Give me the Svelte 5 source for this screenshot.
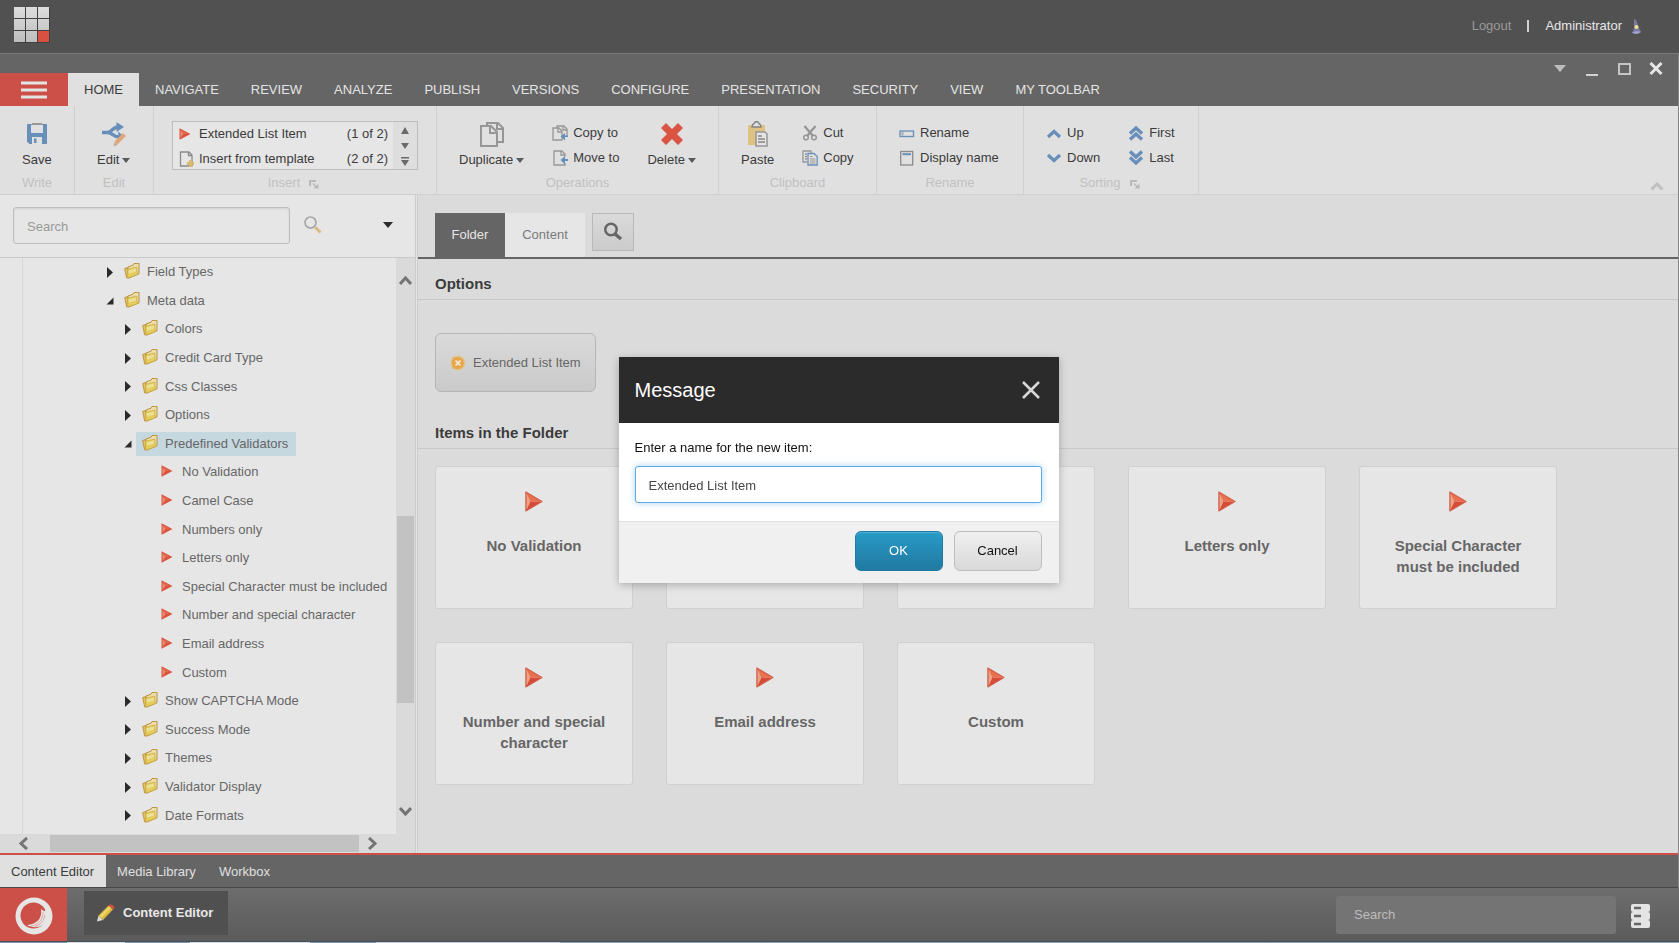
<script>
  const ribbonTabs = ['HOME', 'NAVIGATE', 'REVIEW', 'ANALYZE', 'PUBLISH', 'VERSIONS', 'CONFIGURE', 'PRESENTATION', 'SECURITY', 'VIEW', 'MY TOOLBAR'];

  const tree = [
    { label: 'Field Types', level: 1, state: 'closed' },
    { label: 'Meta data', level: 1, state: 'open' },
    { label: 'Colors', level: 2, state: 'closed' },
    { label: 'Credit Card Type', level: 2, state: 'closed' },
    { label: 'Css Classes', level: 2, state: 'closed' },
    { label: 'Options', level: 2, state: 'closed' },
    { label: 'Predefined Validators', level: 2, state: 'open', selected: true },
    { label: 'No Validation', level: 3 },
    { label: 'Camel Case', level: 3 },
    { label: 'Numbers only', level: 3 },
    { label: 'Letters only', level: 3 },
    { label: 'Special Character must be included', level: 3 },
    { label: 'Number and special character', level: 3 },
    { label: 'Email address', level: 3 },
    { label: 'Custom', level: 3 },
    { label: 'Show CAPTCHA Mode', level: 2, state: 'closed' },
    { label: 'Success Mode', level: 2, state: 'closed' },
    { label: 'Themes', level: 2, state: 'closed' },
    { label: 'Validator Display', level: 2, state: 'closed' },
    { label: 'Date Formats', level: 2, state: 'closed' }
  ];

  // Cards that the dialog covers carry no title.
  const cards = ['No Validation', '', '', 'Letters only', 'Special Character must be included', 'Number and special character', 'Email address', 'Custom'];

  let itemName = $state('Extended List Item');
</script>

{#snippet icon(name)}
  {#if name === 'save'}
    <svg width="20" height="22" viewBox="0 0 20 22"><path d="M0 1h20v20H2.500L0 18.500z" fill="#688fb9"/><path d="M4 2h12v8H4z" fill="#e0e0e0"/><path d="M5 1h10" stroke="#999" stroke-width="2"/><path d="M5 14h10v7H5z" fill="#e0e0e0"/><path d="M7 15.500h2.500V20H7z" fill="#688fb9"/></svg>
  {:else if name === 'edit'}
    <svg width="24" height="24" viewBox="0 0 24 24"><g fill="none" stroke="#688fb9" stroke-width="3.300"><path d="M0 10.500h6C10 10 11 4.500 18 4.500"/><path d="M6 10.500c4 0 5 4.500 11 4.500"/></g><path d="M14.500 0l7.500 5-7.500 5zM16 9.500l5 4-4 4z" fill="#688fb9"/><path d="M14 21l8.500-8.500" stroke="#dfa778" stroke-width="4"/><path d="M11.500 24l1-4 3 3z" fill="#c9a18a"/></svg>
  {:else if name === 'duplicate'}
    <svg width="24" height="26" viewBox="0 0 24 26" fill="none" stroke="#969696" stroke-width="2"><path d="M7 5V2h11l5 5v14h-5M17 2v6h6"/><path d="M1 5h10l6 6v14H1zM10 5v7h7" fill="#e0e0e0"/></svg>
  {:else if name === 'delete'}
    <svg width="22" height="24" viewBox="0 0 22 24"><path d="M5 1l6 6 6-6 5 5-6 6 6 6-5 5-6-6-6 6-5-5 6-6-6-6z" fill="#d95442"/></svg>
  {:else if name === 'paste'}
    <svg width="20" height="26" viewBox="0 0 20 26"><rect x="0" y="4" width="17" height="20" rx="1" fill="#dec283"/><path d="M4 6c0-2 1-3 2-3.500C7 0 10 0 11 2.500c1 .500 2 1.500 2 3.500z" fill="#e0e0e0" stroke="#858585" stroke-width="1.500"/><path d="M8 11h9l2 2v12H8z" fill="#e4e4e4" stroke="#969696" stroke-width="1.500"/><path d="M10 15h4M10 18h7M10 21h7" stroke="#858585" stroke-width="1.500"/></svg>
  {:else if name === 'copyto'}
    <svg width="16" height="16" viewBox="0 0 16 16" fill="none" stroke="#969696" stroke-width="1.300"><path d="M5 3V1h7l3 3v8M11 1v4h4"/><path d="M1 3h6l3 3v9H1zM6 3v4h4" fill="#e0e0e0"/><path d="M16 12h-3v3.500L8.500 11.500 13 8v2.500h3z" fill="#688fb9" stroke="none"/></svg>
  {:else if name === 'moveto'}
    <svg width="16" height="16" viewBox="0 0 16 16" fill="none" stroke="#969696" stroke-width="1.300"><path d="M13 6.500V4l-3-3H2v14h11v-2M9 1v4h4"/><path d="M16 11h-3v3.500L8.500 10 13 6v3h3z" fill="#688fb9" stroke="none"/></svg>
  {:else if name === 'cut'}
    <svg width="16" height="16" viewBox="0 0 16 16" fill="none"><path d="M2.500 1l8.500 10M13.500 1L5 11" stroke="#969696" stroke-width="2.300"/><circle cx="4" cy="12.500" r="2.300" stroke="#969696" stroke-width="1.500"/><circle cx="12" cy="12.500" r="2.300" stroke="#969696" stroke-width="1.500"/></svg>
  {:else if name === 'copy'}
    <svg width="16" height="16" viewBox="0 0 16 16" fill="none"><path d="M5 12H1V1h8v2M3 4h2M3 6.500h2M3 9h2" stroke="#969696" stroke-width="1.300"/><path d="M6 3.500h6l3.200 3V15H6z" fill="#e0e0e0" stroke="#688fb9" stroke-width="1.300"/><path d="M8 6.500h2.500M8 9h5.500M8 11h5.500M8 13h5.500" stroke="#969696"/></svg>
  {:else if name === 'rename'}
    <svg width="16" height="16" viewBox="0 0 16 16" fill="none"><rect x="1" y="6" width="13.500" height="5.500" stroke="#688fb9" stroke-width="1.300"/><path d="M3.500 7v3.500" stroke="#aaa" stroke-width="2"/></svg>
  {:else if name === 'display'}
    <svg width="16" height="16" viewBox="0 0 16 16" fill="none"><rect x="1.700" y="1.500" width="12" height="13.500" stroke="#8a8a8a" stroke-width="1.300"/><path d="M3.500 4.200h8.500" stroke="#688fb9" stroke-width="2"/></svg>
  {:else if name === 'up'}
    <svg width="16" height="16" viewBox="0 0 16 16" fill="none" stroke="#688fb9" stroke-width="3.200"><path d="M2 12l6-5.500L14 12"/></svg>
  {:else if name === 'down'}
    <svg width="16" height="16" viewBox="0 0 16 16" fill="none" stroke="#688fb9" stroke-width="3.200"><path d="M2 5l6 5.500L14 5"/></svg>
  {:else if name === 'first'}
    <svg width="16" height="16" viewBox="0 0 16 16" fill="none" stroke="#688fb9" stroke-width="3.400"><path d="M2 8.500L8 3l6 5.500M2 14.500L8 9l6 5.500"/></svg>
  {:else if name === 'last'}
    <svg width="16" height="16" viewBox="0 0 16 16" fill="none" stroke="#688fb9" stroke-width="3.400"><path d="M2 1.500L8 7l6-5.500M2 7.500L8 13l6-5.500"/></svg>
  {:else if name === 'template'}
    <svg width="16" height="16" viewBox="0 0 16 16" fill="none"><path d="M1.500 1h8.500l3 3v11H1.500zM9.500 1v3.500H13" stroke="#8a8a8a" stroke-width="1.300"/><path d="M11.500 9v7M8 12.500h7" stroke="#d8bb70" stroke-width="2.800"/></svg>
  {:else if name === 'arrow'}
    <svg width="12" height="12" viewBox="0 0 12 12"><path d="M.500.300L11.500 6 .500 11.700z" fill="#db523c"/><path d="M1.500 2v8L4.500 6z" fill="#e88c72"/><path d="M4.500 6L2.500 2.300l6.500 3.500z" fill="#e36a50"/></svg>
  {:else if name === 'bigarrow'}
    <svg width="18" height="21" viewBox="0 0 18 21"><path d="M.800.800L17.300 10.500.800 20.200z" fill="#d84e38" stroke="#cf6450"/><path d="M1.500 2v17L5.500 11.500 4.800 7z" fill="#e9a288"/><path d="M1.500 2l4 8.500L16 10.500z" fill="#e8714f"/><path d="M2 18.500l3.500-8h10.500z" fill="#d64c38"/><path d="M5.500 10.500L16 10.500" stroke="#ec9580" stroke-width=".600"/></svg>
  {:else if name === 'folder'}
    <svg width="16" height="16" viewBox="0 0 16 16"><path d="M.700 5.500l3-1 1 10-2 .500z" fill="#e0c566" stroke="#ba8f3a" stroke-width=".900"/><path d="M4 4l5-1.800 1-1.700 5-.200v10.500L4.500 15.200z" fill="#eddfac" stroke="#ba8f3a"/><path d="M3.700 6.300l9-2.300.600 7.800-9.500 3.200z" fill="#e4cd5c" stroke="#c9a743" stroke-width=".700"/><path d="M4.500 7.300l7.400-1.800.100 3-7 2.200z" fill="#ebe095"/></svg>
  {:else if name === 'launch'}
    <svg width="10" height="9" viewBox="0 0 10 9"><path d="M1 6V1h6" fill="none" stroke="#b9b9b9" stroke-width="2"/><path d="M4 3.500l3 3" fill="none" stroke="#b9b9b9" stroke-width="1.500"/><path d="M9.500 3.500V8.500h-5z" fill="#b9b9b9"/></svg>
  {:else if name === 'caret'}
    <svg width="8" height="5" viewBox="0 0 8 5"><path d="M0 0h8L4 5z" fill="#5a5a5a"/></svg>
  {/if}
{/snippet}

{#snippet big(name, label, caret)}
  <button class="big">
    <span class="big-icon">{@render icon(name)}</span>
    <span class="big-text">{label}{#if caret}{@render icon('caret')}{/if}</span>
  </button>
{/snippet}

{#snippet small(name, label)}
  <button class="small">{@render icon(name)}<span>{label}</span></button>
{/snippet}

<div class="page">
  <header class="top">
    <svg class="logo" width="36" height="36" viewBox="0 0 36 36" role="img" aria-label="Launchpad">
      <defs><linearGradient id="tile" x1="0" y1="0" x2="0" y2="36" gradientUnits="userSpaceOnUse"><stop offset="0" stop-color="#dedede"/><stop offset="1" stop-color="#bdbdbd"/></linearGradient></defs>
      <path d="M1 1h35v35H1z" fill="#404040"/>
      <path d="M0 0h11v11H0zM12 0h11v11H12zM24 0h11v11H24zM0 12h11v11H0zM12 12h11v11H12zM24 12h11v11H24zM0 24h11v11H0zM12 24h11v11H12z" fill="url(#tile)"/>
      <path d="M24 24h11v11H24z" fill="#d8503f"/>
    </svg>
    <nav class="account">
      <a href="#logout" class="logout">Logout</a>
      <span class="bar"></span>
      <a href="#account" class="user">Administrator</a>
      <svg width="10" height="15" viewBox="0 0 10 15"><path d="M2 0l2 1 3 8 2 4-4 2-5-1 2-5z" fill="#7d7aa8"/><path d="M0 14c2-2 7-2 9-1l-4 2z" fill="#a5a3cc"/><circle cx="4.500" cy="8" r="2" fill="#efe28a"/></svg>
    </nav>
  </header>

  <main class="window">
    <div class="titlebar">
      <nav class="ribbon-tabs">
        <button class="burger" aria-label="Menu"><svg width="28" height="18" viewBox="0 0 28 18"><path d="M1 2h26M1 9h26M1 16h26" stroke="#e4e4e4" stroke-width="3"/></svg></button>
        {#each ribbonTabs as tab, i}
          <button class="rtab" class:active={i === 0}>{tab}</button>
        {/each}
      </nav>
      <div class="controls">
        <button aria-label="Options"><svg width="14" height="14" viewBox="0 0 14 14"><path d="M1 3h12L7 10z" fill="#bdbdbd"/></svg></button>
        <button aria-label="Minimize"><svg width="14" height="14" viewBox="0 0 14 14"><path d="M1 13h12" stroke="#d0d0d0" stroke-width="2"/></svg></button>
        <button aria-label="Maximize"><svg width="14" height="14" viewBox="0 0 14 14"><rect x="2" y="2" width="11" height="10" fill="none" stroke="#c4c4c4" stroke-width="2"/></svg></button>
        <button aria-label="Close"><svg width="14" height="14" viewBox="0 0 14 14"><path d="M1.500 1l11 11M12.500 1l-11 11" stroke="#e6e6e6" stroke-width="3"/></svg></button>
      </div>
    </div>

    <div class="ribbon">
      <section class="group g-write">
        <div class="tools">{@render big('save', 'Save', false)}</div>
        <div class="caption">Write</div>
      </section>
      <section class="group g-edit">
        <div class="tools">{@render big('edit', 'Edit', true)}</div>
        <div class="caption">Edit</div>
      </section>
      <section class="group g-insert">
        <div class="tools">
          <div class="gallery">
            <div class="gallery-list">
              <button class="entry"><span class="entry-icon">{@render icon('arrow')}</span>Extended List Item<span class="count">(1 of 2)</span></button>
              <button class="entry"><span class="entry-icon">{@render icon('template')}</span>Insert from template<span class="count">(2 of 2)</span></button>
            </div>
            <div class="gallery-nav">
              <button aria-label="Previous"><svg width="8" height="7" viewBox="0 0 8 7"><path d="M0 7h8L4 0z" fill="#6a6a6a"/></svg></button>
              <button aria-label="Next"><svg width="8" height="6" viewBox="0 0 8 6"><path d="M0 0h8L4 6z" fill="#6a6a6a"/></svg></button>
              <button aria-label="All"><svg width="8" height="9" viewBox="0 0 8 9"><path d="M0 0h8v1.500H0zM0 3h8L4 9z" fill="#6a6a6a"/></svg></button>
            </div>
          </div>
        </div>
        <div class="caption">Insert<span class="launch">{@render icon('launch')}</span></div>
      </section>
      <section class="group g-ops">
        <div class="tools">
          {@render big('duplicate', 'Duplicate', true)}
          <div class="stack">{@render small('copyto', 'Copy to')}{@render small('moveto', 'Move to')}</div>
          {@render big('delete', 'Delete', true)}
        </div>
        <div class="caption">Operations</div>
      </section>
      <section class="group g-clip">
        <div class="tools">
          {@render big('paste', 'Paste', false)}
          <div class="stack">{@render small('cut', 'Cut')}{@render small('copy', 'Copy')}</div>
        </div>
        <div class="caption">Clipboard</div>
      </section>
      <section class="group g-name">
        <div class="tools"><div class="stack">{@render small('rename', 'Rename')}{@render small('display', 'Display name')}</div></div>
        <div class="caption">Rename</div>
      </section>
      <section class="group g-sort">
        <div class="tools">
          <div class="stack">{@render small('up', 'Up')}{@render small('down', 'Down')}</div>
          <div class="stack">{@render small('first', 'First')}{@render small('last', 'Last')}</div>
        </div>
        <div class="caption">Sorting<span class="launch">{@render icon('launch')}</span></div>
      </section>
      <button class="collapse" aria-label="Collapse ribbon"><svg width="14" height="10" viewBox="0 0 14 10"><path d="M1.500 8.500L7 3l5.500 5.500" fill="none" stroke="#bfbfbf" stroke-width="3"/></svg></button>
    </div>

    <div class="work">
      <aside class="side">
        <div class="finder">
          <input type="text" placeholder="Search" aria-label="Search the tree" />
          <button aria-label="Run search"><svg width="18" height="18" viewBox="0 0 18 18" fill="none"><circle cx="6.500" cy="6.500" r="5.500" stroke="#a4a4a4" stroke-width="1.600"/><path d="M11 11l5.500 5.500" stroke="#dcb887" stroke-width="3"/></svg></button>
          <button class="more" aria-label="Search options"><svg width="10" height="6" viewBox="0 0 10 6"><path d="M0 0h10L5 6z" fill="#2b2b2b"/></svg></button>
        </div>
        <div class="tree-row">
          <ul class="tree">
            {#each tree as node}
              <li class="l{node.level}">
                <span class="toggle">
                  {#if node.state === 'closed'}
                    <button aria-label="Expand {node.label}"><svg width="6" height="11" viewBox="0 0 6 11"><path d="M0 0l6 5.500L0 11z" fill="#2b2b2b"/></svg></button>
                  {:else if node.state === 'open'}
                    <button aria-label="Collapse {node.label}"><svg width="8" height="8" viewBox="0 0 8 8"><path d="M7.500.500v7H.500z" fill="#2b2b2b"/></svg></button>
                  {/if}
                </span>
                <a href="#item" class="node" class:selected={node.selected}>
                  <span class="node-icon">{@render icon(node.level === 3 ? 'arrow' : 'folder')}</span>{node.label}
                </a>
              </li>
            {/each}
          </ul>
          <div class="vbar">
            <svg width="13" height="10" viewBox="0 0 13 10"><path d="M1 9l5.500-6L12 9" fill="none" stroke="#747474" stroke-width="3"/></svg>
            <span class="before"></span><span class="thumb"></span><span class="after"></span>
            <svg width="13" height="10" viewBox="0 0 13 10"><path d="M1 1l5.500 6L12 1" fill="none" stroke="#747474" stroke-width="3"/></svg>
          </div>
        </div>
        <div class="hbar">
          <svg width="10" height="13" viewBox="0 0 10 13"><path d="M9 1L3 6.500 9 12" fill="none" stroke="#747474" stroke-width="3"/></svg>
          <span class="thumb"></span>
          <svg width="10" height="13" viewBox="0 0 10 13"><path d="M1 1l6 5.500L1 12" fill="none" stroke="#747474" stroke-width="3"/></svg>
        </div>
      </aside>

      <section class="editor">
        <nav class="etabs">
          <button class="etab active">Folder</button>
          <button class="etab">Content</button>
          <button class="lens" aria-label="Search"><svg width="20" height="20" viewBox="0 0 20 20" fill="none" stroke="#666"><circle cx="8" cy="7.500" r="5.700" stroke-width="2.500"/><path d="M12 12l6 5" stroke-width="3.500"/></svg></button>
        </nav>
        <h2>Options</h2>
        <div class="options">
          <button class="create">
            <svg width="16" height="16" viewBox="0 0 16 16"><defs><radialGradient id="glow"><stop offset="0" stop-color="#f6efe0"/><stop offset=".250" stop-color="#efb565"/><stop offset=".650" stop-color="#e7a548"/><stop offset="1" stop-color="#e7cf7a" stop-opacity=".200"/></radialGradient></defs><circle cx="8" cy="8" r="8" fill="url(#glow)"/><path d="M2 2h8l4 6-4 6H2z" fill="#e6a040" opacity=".400"/><path d="M5.500 5.500l5 5M10.500 5.500l-5 5" stroke="#f3ecdc" stroke-width="1.500"/></svg>
            Extended List Item
          </button>
        </div>
        <h2>Items in the Folder</h2>
        <div class="cards">
          {#each cards as card}
            <a href="#item" class="card">{@render icon('bigarrow')}<span>{card}</span></a>
          {/each}
        </div>
      </section>
    </div>

    <nav class="apps">
      <button class="active">Content Editor</button>
      <button>Media Library</button>
      <button>Workbox</button>
    </nav>
  </main>

  <footer class="taskbar">
    <button class="start" aria-label="Start">
      <svg width="38" height="38" viewBox="0 0 38 38"><circle cx="19" cy="19" r="18.500" fill="#e6e6e6"/><circle cx="18.500" cy="18.500" r="13" fill="#cd5048"/><path d="M26 12c1.500 9-4 15.500-14 16 9 5 20 1 20.500-9 0-3-.500-5-1.500-6.500-.500 1-1 1.500-2 1.700z" fill="#e6e6e6"/><path d="M28 15c0 8-5 13-12 14M30 18c-1 6-5 10-10 11.500" fill="none" stroke="#dc8a84" stroke-width=".700"/></svg>
    </button>
    <button class="task">
      <svg width="18" height="18" viewBox="0 0 18 18"><path d="M0 17.500l1.500-6L6 16z" fill="#dcdcd4"/><path d="M1.500 11.500L11.500 1.500l4.500 4-10 10.500z" fill="#dab944"/><path d="M2.500 12L12.500 2.500l1.500 1.300-9.500 10z" fill="#f0da66"/><path d="M11.500 1.500l1.500-1c1.500-.700 5 2 4.300 3.500L16 5.500z" fill="#cf5340"/></svg>
      <span>Content Editor</span>
    </button>
    <input type="text" class="tasksearch" placeholder="Search" aria-label="Search" />
    <button class="servers" aria-label="Databases">
      <svg width="20" height="24" viewBox="0 0 20 24"><g fill="#e4e4e4"><rect x="0" y="0" width="19" height="8" rx="2"/><rect x="0" y="8" width="19" height="8" rx="2"/><rect x="0" y="16" width="19" height="8" rx="2"/></g><path d="M3 4h7M3 12h7M3 20h7" stroke="#666" stroke-width="2.500"/></svg>
    </button>
  </footer>
  <div class="edge"></div>
</div>

<div class="backdrop">
  <div class="dialog" role="dialog" aria-modal="true" aria-labelledby="dialog-title">
    <div class="dialog-head">
      <h1 id="dialog-title">Message</h1>
      <button aria-label="Close"><svg width="18" height="18" viewBox="0 0 18 18"><path d="M1 1l16 16M17 1L1 17" stroke="#d8d8d8" stroke-width="2.500"/></svg></button>
    </div>
    <div class="dialog-body">
      <label for="item-name">Enter a name for the new item:</label>
      <input id="item-name" type="text" bind:value={itemName} />
    </div>
    <div class="dialog-foot">
      <button class="ok">OK</button>
      <button class="cancel">Cancel</button>
    </div>
  </div>
</div>

<style>
  :global(body) { background: #656565; }
  .page, .backdrop { font: 13px/18px "Liberation Sans", Arial, sans-serif; color: #3b3b3b; }
  .page *, .backdrop * { box-sizing: border-box; }
  button, input { font: inherit; color: inherit; }
  button { background: none; border: 0; padding: 0; white-space: nowrap; }
  a { color: inherit; text-decoration: none; }
  svg { display: block; flex: none; }
  h1, h2, ul { margin: 0; padding: 0; }

  .page { min-height: 100vh; display: flex; flex-direction: column; }

  .top { height: 53px; background: #515151; display: flex; align-items: center; justify-content: space-between; padding: 0 37px 3px 14px; }
  .account { display: flex; align-items: center; padding-top: 2px; color: #e8e8e8; }
  .logout { color: #999; }
  .bar { width: 2px; height: 12px; background: #d0d0d0; margin: 0 16px; }
  .user { margin-right: 10px; }

  .window { flex: 1; display: flex; flex-direction: column; border-top: 1px solid #797979; border-right: 1px solid #858585; background: #656565; }
  .titlebar { display: flex; justify-content: space-between; height: 52px; }
  .ribbon-tabs { display: flex; align-self: flex-end; height: 33px; color: #e4e4e4; }
  .burger { width: 68px; background: #cd5048; display: flex; align-items: center; justify-content: center; }
  .rtab { padding: 0 16px; }
  .rtab.active { background: #e0e0e0; color: #3b3b3b; }
  .controls { display: flex; gap: 18px; padding: 8px 15px 0 0; align-items: flex-start; }

  .ribbon { display: flex; height: 89px; background: #e0e0e0; border-bottom: 1px solid #cfcfcf; }
  .group { display: flex; flex-direction: column; border-right: 1px solid #cfcfcf; }
  .tools { display: flex; gap: 28px; height: 64px; padding: 14px 0 0 22px; }
  .caption { display: flex; align-items: center; justify-content: center; gap: 9px; height: 24px; padding-top: 1px; color: #c0c0c0; }
  .launch { padding-top: 4px; }
  .g-write { width: 75px; }
  .g-edit { width: 79px; }
  .g-insert { width: 283px; }
  .g-ops { width: 282px; }
  .g-clip { width: 158px; }
  .g-name { width: 147px; }
  .g-sort { width: 175px; }
  .g-insert .tools { padding: 15px 18px 0; }
  .g-insert .caption, .g-sort .caption { padding-right: 3px; }
  .big { display: flex; flex-direction: column; align-items: center; height: 52px; }
  .big-icon { height: 28px; display: flex; align-items: center; }
  .big-text { height: 24px; display: flex; align-items: center; gap: 3px; }
  .stack { display: flex; flex-direction: column; }
  .small { height: 26px; display: flex; align-items: center; gap: 5px; }
  .gallery { flex: 1; height: 49px; display: flex; border: 1px solid #bdbdbd; overflow: hidden; }
  .gallery-list { flex: 1; background: #e6e6e6; }
  .entry { width: 100%; height: 26px; display: flex; align-items: center; padding: 0 5px; text-align: left; }
  .entry:first-child { height: 24px; }
  .entry-icon { width: 21px; padding-left: 1px; }
  .count { margin-left: auto; }
  .gallery-nav { width: 24px; background: #dedede; display: flex; flex-direction: column; align-items: center; justify-content: space-between; padding: 5px 0 3px; }
  .collapse { margin: auto 14px 3px auto; }

  .work { flex: 1; display: flex; background: #dbdbdb; border-bottom: 2px solid #cd5048; }
  .side { width: 418px; flex: none; display: flex; flex-direction: column; background: #e6e6e6; border-right: 3px double #cbcbcb; }
  .finder { height: 63px; display: flex; align-items: center; padding: 0 22px 2px 13px; border-bottom: 1px solid #c9c9c9; }
  .finder input { width: 277px; height: 37px; padding: 2px 13px 0; margin-right: 14px; border: 1px solid #bdbdbd; border-radius: 3px; background: #e6e6e6; box-shadow: inset 0 1px 2px #d0d0d0; }
  input { outline: none; }
  .finder input::placeholder { color: #999; opacity: 1; }
  .more { margin-left: auto; }
  .tree-row { flex: 1; display: flex; }
  .tree { flex: 1; list-style: none; display: grid; grid-auto-rows: 1fr; padding-bottom: 4px; color: #666; background: linear-gradient(90deg, transparent 22px, #d8d8d8 22px, #d8d8d8 23px, transparent 23px); }
  .tree li { display: flex; align-items: center; }
  .l1 { padding-left: 104px; }
  .l2 { padding-left: 122px; }
  .l3 { padding-left: 139px; }
  .toggle { width: 14px; padding-right: 3px; display: flex; justify-content: center; }
  .node { display: flex; align-items: center; gap: 7px; height: 24px; padding: 0 8px 0 6px; white-space: nowrap; }
  .node-icon { width: 16px; height: 18px; display: flex; justify-content: center; }
  .l3 .node-icon { padding-top: 2px; }
  .node.selected { background: #c5d7df; }
  .vbar { width: 19px; background: #dadada; display: flex; flex-direction: column; align-items: center; padding: 17px 1px; }
  .thumb { background: #c2c2c2; }
  .before { flex: 231; }
  .vbar .thumb { flex: 187; width: 17px; }
  .after { flex: 104; }
  .hbar { height: 19px; background: #dadada; display: flex; align-items: center; padding: 0 37px 0 18px; }
  .hbar .thumb { flex: 1; height: 17px; margin: 0 9px 0 22px; }

  .editor { flex: 1; min-width: 0; }
  .etabs { display: flex; height: 64px; padding: 18px 0 0 17px; border-bottom: 2px solid #656565; }
  .etab { width: 80px; background: #e6e6e6; color: #7a7a7a; }
  .etab.active { width: 70px; background: #656565; color: #e6e6e6; }
  .lens { width: 42px; height: 38px; margin-left: 7px; border: 1px solid #b8b8b8; background: linear-gradient(#dadada, #cbcbcb); display: flex; align-items: center; justify-content: center; }
  h2 { font-size: 15px; line-height: 20px; padding: 15px 17px 5px; color: #3b3b3b; border-bottom: 1px solid #c9c9c9; }
  .options { padding: 33px 17px 16px; }
  .create { height: 59px; padding: 0 14px; display: flex; align-items: center; gap: 7px; color: #666; border: 1px solid #b5b5b5; border-radius: 6px; background: linear-gradient(#dadada, #cacaca); }
  .cards { display: flex; flex-wrap: wrap; gap: 33px; padding: 17px; }
  .card { width: 198px; height: 143px; display: flex; flex-direction: column; align-items: center; gap: 23px; padding: 24px 20px; background: #e6e6e6; border: 1px solid #d0d0d0; border-radius: 3px; font-size: 15px; font-weight: bold; line-height: 21px; text-align: center; color: #666; }

  .apps { height: 33px; display: flex; color: #e0e0e0; border-bottom: 1px solid #484848; }
  .apps button { padding: 1px 12px 0 11px; }
  .apps .active { background: #e0e0e0; color: #3b3b3b; }

  .taskbar { height: 53px; display: flex; align-items: center; padding-right: 28px; background: linear-gradient(#6d6d6d, #5b5b5b); color: #e8e8e8; }
  .start { width: 67px; height: 53px; background: #cd5048; display: flex; align-items: center; justify-content: center; padding-top: 2px; }
  .task { width: 144px; height: 44px; margin: 0 auto 3px 17px; padding: 0 13px; background: #505050; display: flex; align-items: center; gap: 8px; font-weight: bold; }
  .tasksearch { width: 280px; height: 38px; margin-right: 15px; padding: 0 18px; border: 0; border-radius: 3px; background: #747474; }
  .tasksearch::placeholder { color: #bdbdbd; opacity: 1; }
  .servers { padding-top: 3px; }
  .edge { height: 2px; border-top: 1px solid #45525d; background: linear-gradient(90deg, #7d95a8 67px, #d3dae2 67px, #d3dae2 125px, #7d95a8 125px, #7d95a8 190px, #d3dae2 190px, #d3dae2 310px, #7d95a8 310px, #7d95a8 376px, #c3ced8 376px, #c3ced8 560px, #8b9fb0 560px); }

  .backdrop { position: fixed; inset: 0; display: flex; align-items: center; justify-content: center; padding: 0 2px 3px 0; }
  .dialog { width: 440px; background: #fff; color: #111; box-shadow: 0 2px 8px rgba(0, 0, 0, .25); }
  .dialog-head { height: 66px; padding: 0 19px 0 16px; display: flex; align-items: center; justify-content: space-between; background: #2b2b2b; color: #fff; }
  h1 { font-size: 20px; font-weight: normal; line-height: 26px; }
  .dialog-body { padding: 16px 17px 18px 16px; display: flex; flex-direction: column; gap: 9px; }
  .dialog-body input { height: 37px; padding: 2px 13px 0; border: 1px solid #5ca9e6; border-radius: 3px; color: #474747; box-shadow: 0 0 6px rgba(92, 169, 230, .5); }
  .dialog-foot { display: flex; justify-content: flex-end; gap: 11px; padding: 9px 17px 12px; border-top: 1px solid #e0e0e0; background: #f0f0f0; }
  .dialog-foot button { width: 88px; height: 40px; border-radius: 6px; }
  .ok { color: #fff; border: 1px solid #1f7ba3; background: linear-gradient(#289bc8, #2079a0); box-shadow: inset 0 1px #4fb0d5; }
  .cancel { color: #111; border: 1px solid #bdbdbd; background: linear-gradient(#f0f0f0, #d9d9d9); }
</style>
